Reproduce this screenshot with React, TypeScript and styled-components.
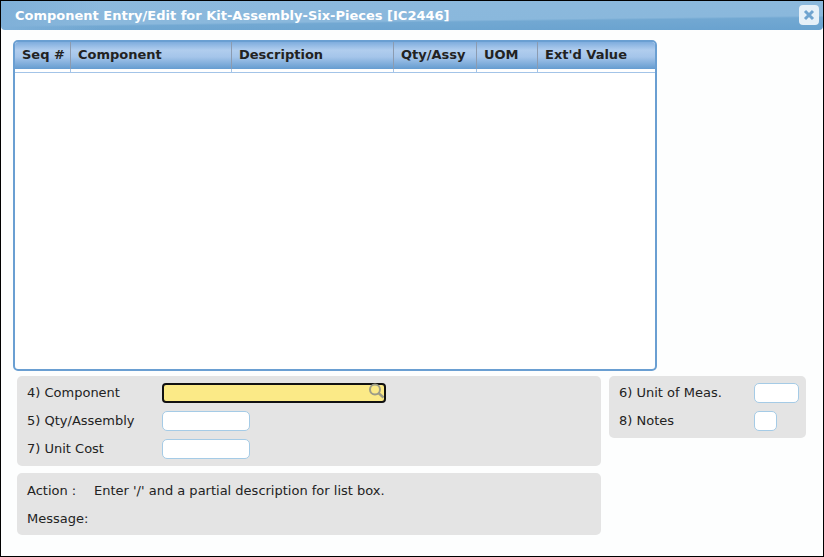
import { createGlobalStyle } from 'styled-components';
import styled from 'styled-components';

const GlobalStyle = createGlobalStyle`
  html, body {
    margin: 0;
    padding: 0;
    background: #fff;
  }
  body {
    font-family: "DejaVu Sans", Verdana, sans-serif;
    font-size: 13px;
    color: #222;
  }
`

const columns = [
  { label: 'Seq #', width: 56 },
  { label: 'Component', width: 161 },
  { label: 'Description', width: 162 },
  { label: 'Qty/Assy', width: 83 },
  { label: 'UOM', width: 61 },
  { label: "Ext'd Value", width: 117 },
]

const App = () => {
  return (
    <Window>
      <GlobalStyle />
      <TitleBar>
        <Title>Component Entry/Edit for Kit-Assembly-Six-Pieces [IC2446]</Title>
        <CloseButton>
          <svg width="12" height="12" viewBox="0 0 12 12">
            <path d="M2 2 L10 10 M10 2 L2 10" stroke="#6fa3cf" strokeWidth="3" />
          </svg>
        </CloseButton>
      </TitleBar>

      <Grid>
        <GridHead>
          {columns.map((c) => (
            <HeadCell key={c.label} $width={c.width}>{c.label}</HeadCell>
          ))}
        </GridHead>
        <GridStub>
          {columns.map((c) => (
            <StubCell key={c.label} $width={c.width} />
          ))}
        </GridStub>
      </Grid>

      <Lower>
        <LeftColumn>
          <Panel $height={90}>
            <FormRow>
              <Label>4) Component</Label>
              <SearchField>
                <SearchIcon width="18" height="18" viewBox="0 0 18 18">
                  <circle cx="9" cy="6.5" r="5" fill="none" stroke="#9c9c88" strokeWidth="2" />
                  <path d="M12.5 10 L17.5 14.5" stroke="#9c9c88" strokeWidth="2.4" />
                </SearchIcon>
              </SearchField>
            </FormRow>
            <FormRow>
              <Label>5) Qty/Assembly</Label>
              <TextField $width={88} />
            </FormRow>
            <FormRow>
              <Label>7) Unit Cost</Label>
              <TextField $width={88} />
            </FormRow>
          </Panel>
          <MessagePanel>
            <MessageRow>
              <ActionLabel>Action :</ActionLabel>
              <span>Enter '/' and a partial description for list box.</span>
            </MessageRow>
            <MessageRow>
              <span>Message:</span>
            </MessageRow>
          </MessagePanel>
        </LeftColumn>

        <Panel $height={62} $width={197}>
          <FormRow>
            <Label>6) Unit of Meas.</Label>
            <TextField $width={45} />
          </FormRow>
          <FormRow>
            <Label>8) Notes</Label>
            <TextField $width={23} />
          </FormRow>
        </Panel>
      </Lower>
    </Window>
  )
}

export default App;

const Window = styled.div`
  width: 824px;
  height: 557px;
  box-sizing: border-box;
  border: 1px solid #000;
  background: #fdfefe;
  overflow: hidden;
`
const TitleBar = styled.div`
  height: 29px;
  box-sizing: border-box;
  display: flex;
  align-items: center;
  justify-content: space-between;
  padding: 0 4px 1px 14px;
  border-radius: 0 0 4px 4px;
  background: linear-gradient(to right, #7fb0d8 0%, rgba(127, 176, 216, 0) 12%),
    linear-gradient(179.3deg, #8cb9dd 0%, #8ab8dc 63%, #72a8d2 68%, #69a2cf 100%);
`
const Title = styled.div`
  color: #fff;
  font-weight: bold;
  font-size: 13px;
`
const CloseButton = styled.div`
  width: 20px;
  height: 20px;
  border-radius: 4px;
  background: #e6f0f8;
  display: flex;
  align-items: center;
  justify-content: center;
`
const Grid = styled.div`
  width: 644px;
  height: 331px;
  box-sizing: border-box;
  margin: 10px 0 0 12px;
  border: 2px solid #6a9fd2;
  border-radius: 5px;
  background: #fff;
  overflow: hidden;
`
const GridHead = styled.div`
  display: flex;
  height: 27px;
  background: linear-gradient(to bottom, #7fadde 0%, #b0cdee 30%, #a5c5ea 55%, #659cd0 100%);
`
const HeadCell = styled.div<{ $width: number }>`
  width: ${(p) => p.$width}px;
  box-sizing: border-box;
  padding: 0 0 2px 7px;
  display: flex;
  align-items: center;
  color: #222;
  font-weight: bold;
  font-size: 13px;
  border-right: 1px solid #8c9bb0;
  &:last-child {
    border-right: 0;
  }
`
const GridStub = styled.div`
  display: flex;
  height: 3px;
  border-bottom: 1px solid #a3c4e8;
`
const StubCell = styled.div<{ $width: number }>`
  width: ${(p) => p.$width}px;
  box-sizing: border-box;
  border-right: 1px solid #a3c4e8;
  &:last-child {
    border-right: 0;
  }
`
const Lower = styled.div`
  display: flex;
  align-items: flex-start;
  gap: 8px;
  margin: 5px 0 0 16px;
`
const LeftColumn = styled.div`
  width: 584px;
  display: flex;
  flex-direction: column;
  gap: 7px;
`
const Panel = styled.div<{ $height: number; $width?: number }>`
  height: ${(p) => p.$height}px;
  width: ${(p) => (p.$width ? `${p.$width}px` : 'auto')};
  box-sizing: border-box;
  background: #e4e4e4;
  border-radius: 5px;
  padding: 7px 0 0 10px;
  display: flex;
  flex-direction: column;
  gap: 8px;
`
const FormRow = styled.div`
  display: flex;
  align-items: center;
  height: 20px;
`
const Label = styled.div`
  width: 135px;
  padding-bottom: 2px;
`
const TextField = styled.div<{ $width: number }>`
  width: ${(p) => p.$width}px;
  height: 20px;
  box-sizing: border-box;
  background: #fff;
  border: 1px solid #a5cbe6;
  border-radius: 5px;
`
const SearchField = styled.div`
  position: relative;
  width: 224px;
  height: 20px;
  box-sizing: border-box;
  background: #fbea87;
  border: 2px solid #111;
  border-radius: 4px;
`
const SearchIcon = styled.svg`
  position: absolute;
  top: -2px;
  right: 0;
`
const MessagePanel = styled.div`
  height: 62px;
  box-sizing: border-box;
  background: #e4e4e4;
  border-radius: 5px;
  padding: 9px 0 0 10px;
  display: flex;
  flex-direction: column;
  gap: 12px;
`
const MessageRow = styled.div`
  display: flex;
  height: 16px;
  align-items: center;
`
const ActionLabel = styled.span`
  width: 67px;
`
